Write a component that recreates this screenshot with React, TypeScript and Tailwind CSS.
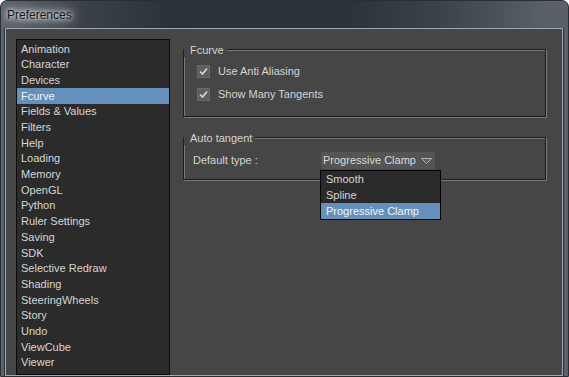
import { type FC } from "react";

const categories = [
  "Animation",
  "Character",
  "Devices",
  "Fcurve",
  "Fields & Values",
  "Filters",
  "Help",
  "Loading",
  "Memory",
  "OpenGL",
  "Python",
  "Ruler Settings",
  "Saving",
  "SDK",
  "Selective Redraw",
  "Shading",
  "SteeringWheels",
  "Story",
  "Undo",
  "ViewCube",
  "Viewer",
];

const tangentTypes = ["Smooth", "Spline", "Progressive Clamp"];

const CheckBox: FC<{ label: string }> = ({ label }) => (
  <div className="flex h-[13px] items-center gap-[8px]">
    <div className="flex h-[13px] w-[13px] items-center justify-center border border-[#6a6a6a] bg-[#5e5e5e]">
      <svg width="11" height="11" viewBox="0 0 11 11">
        <polyline points="2,5.5 4.5,8 9,2.5" fill="none" stroke="#d6d6d6" strokeWidth="1.7" />
      </svg>
    </div>
    <span className="text-[#d4d4d4]">{label}</span>
  </div>
);

const GroupBox: FC<{ title: string; className: string; children: React.ReactNode }> = ({
  title,
  className,
  children,
}) => (
  <div
    className={`relative w-[363px] border border-[#1d1d1d] shadow-[inset_1px_1px_0_#7a7a7a,1px_1px_0_#7a7a7a] ${className}`}
  >
    <span className="absolute -top-[7px] left-0 bg-[#464646] pl-[6px] pr-[3px] leading-[14px] text-[#d4d4d4]">
      {title}
    </span>
    {children}
  </div>
);

export default function App() {
  return (
    <div className="flex h-[377px] w-[569px] flex-col overflow-hidden rounded-t-[7px] border border-[#2a2f36] bg-[linear-gradient(90deg,#5d636a_0%,#3c424a_14%,#2b323a_30%,#2c333b_62%,#3c434b_78%,#5a6067_96%)] text-[11px] [font-family:'Liberation_Sans',Arial,sans-serif]">
      <div className="flex h-[27px] shrink-0 items-center pl-[6px] pt-[1px]">
        <span className="text-[12px] text-[#15161c] [text-shadow:0_0_4px_#ffffff,0_0_8px_rgba(255,255,255,0.9),0_0_14px_rgba(255,255,255,0.7),0_0_22px_rgba(255,255,255,0.5)]">
          Preferences
        </span>
      </div>

      <div className="flex flex-1 pl-[4px] pr-[5px]">
        <div className="flex flex-1 border border-[#a3a8ad] bg-[#464646] pl-[10px] pt-[10px] shadow-[-1px_0_0_#2d333a,1px_0_0_#2d333a]">
          <div className="h-[336px] w-[154px] shrink-0 border border-[#0c0c0c] bg-[#2b2b2b] pt-[1px]">
            {categories.map((name) => (
              <div
                key={name}
                className={`flex h-[15.7px] items-center pl-[4px] ${
                  name === "Fcurve" ? "bg-[#6590bb] text-[#f4f4f4]" : "text-[#d6d6d6]"
                }`}
              >
                {name}
              </div>
            ))}
          </div>

          <div className="ml-[13px] flex flex-col">
            <GroupBox title="Fcurve" className="mt-[10px] h-[68px]">
              <div className="flex flex-col gap-[10px] pl-[13px] pt-[15px]">
                <CheckBox label="Use Anti Aliasing" />
                <CheckBox label="Show Many Tangents" />
              </div>
            </GroupBox>

            <GroupBox title="Auto tangent" className="mt-[20px] h-[43px]">
              <div className="flex items-center pl-[9px] pt-[14px]">
                <span className="w-[128px] text-[#d4d4d4]">Default type :</span>
                <div className="relative flex h-[17px] w-[114px] items-center justify-between bg-[#545554] pl-[2px] pr-[3px] text-[#dadada]">
                  <span>Progressive Clamp</span>
                  <svg width="11" height="6" viewBox="0 0 11 6">
                    <polygon points="0.5,0.5 10.5,0.5 5.5,5.5" fill="#5e5e5e" stroke="#b4b4b4" strokeWidth="1" />
                  </svg>
                  <div className="absolute -left-[1px] top-[18px] z-10 w-[121px] border border-[#050505] bg-[#2a2a2a]">
                    {tangentTypes.map((t) => (
                      <div
                        key={t}
                        className={`flex h-[16px] items-center pl-[5px] ${
                          t === "Progressive Clamp" ? "bg-[#6590bb] text-[#f4f4f4]" : "text-[#d6d6d6]"
                        }`}
                      >
                        {t}
                      </div>
                    ))}
                  </div>
                </div>
              </div>
            </GroupBox>
          </div>
        </div>
      </div>
    </div>
  );
}
